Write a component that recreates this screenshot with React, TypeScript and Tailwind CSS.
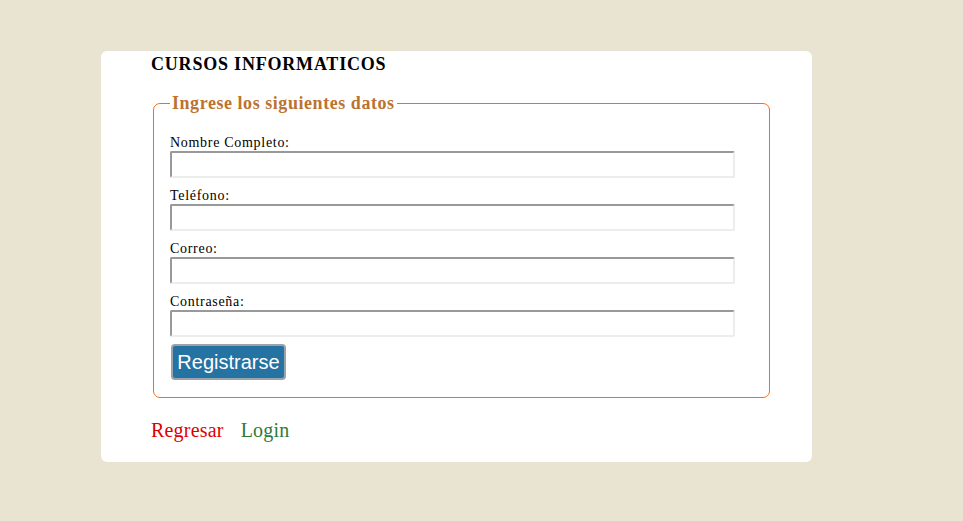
export default function App() {
  const fields = ["Nombre Completo:", "Teléfono:", "Correo:", "Contraseña:"];

  return (
    <div className="min-h-[521px] w-full bg-[#e9e3d1] pt-[51px] pl-[101px] font-['Liberation_Serif',serif]">
      {/* Card */}
      <div className="w-[711px] h-[411px] bg-white rounded-[6px] pl-[50px] pr-[42px] pt-[3px]">
        <h1 className="text-[18px] leading-[20px] tracking-[0.8px] font-bold text-black">CURSOS INFORMATICOS</h1>

        <fieldset className="mt-[19px] ml-[2px] border border-[#f26d1c] rounded-[7px] pl-[16px] pr-[34px] pt-[22px] pb-[17px]">
          <legend className="px-[2px] text-[18px] leading-[20px] tracking-[0.55px] font-bold text-[#bd7330]">
            Ingrese los siguientes datos
          </legend>

          {fields.map((f) => (
            <div key={f} className="mb-[10px]">
              <label className="block text-[14px] leading-[16px] tracking-[0.7px] text-black">{f}</label>
              <input
                type={f === "Contraseña:" ? "password" : "text"}
                className="block w-[565px] h-[27px] bg-white border-2 border-t-[#999999] border-l-[#999999] border-b-[#ededed] border-r-[#ededed] rounded-[2px] outline-none"
              />
            </div>
          ))}

          <button className="mt-[-3px] ml-[1px] w-[115px] h-[36px] bg-[#2473a2] text-white text-[20px] font-['Liberation_Sans',sans-serif] border-2 border-[#9aa3aa] rounded-[4px]">
            Registrarse
          </button>
        </fieldset>

        <div className="mt-[20px] flex gap-[17px] text-[20px] leading-[24px] tracking-[0.2px]">
          <a href="#" className="text-[#e00000]">Regresar</a>
          <a href="#" className="text-[#2f7a3b]">Login</a>
        </div>
      </div>
    </div>
  );
}
